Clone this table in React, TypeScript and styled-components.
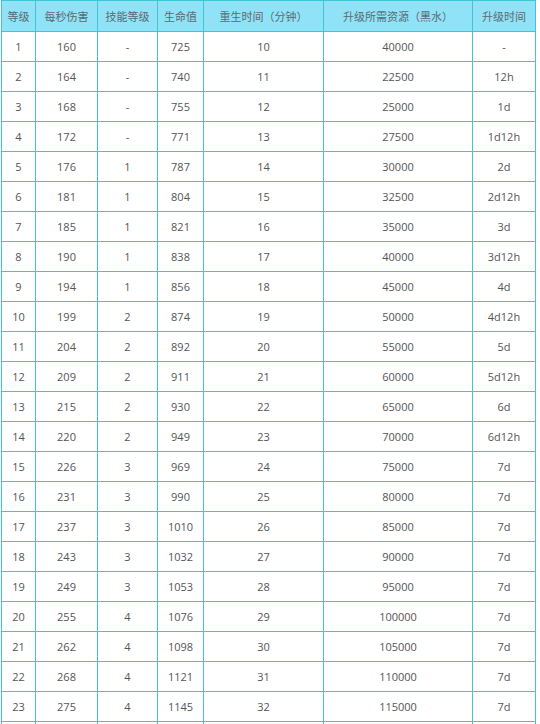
import React from 'react';
import styled, { createGlobalStyle } from 'styled-components';

const GlobalStyle = createGlobalStyle`
    body {
        margin: 0;
        background: #ffffff;
        font-family: 'Noto Sans CJK SC', 'Noto Sans', sans-serif;
    }
`;

const Wrap = styled.div`
    padding-left: 1px;
    width: 535px;
`;

const Table = styled.table`
    width: 534px;
    border-collapse: collapse;
    table-layout: fixed;
    font-size: 11px;
    color: #555;
`;

const HeadCell = styled.th`
    height: 30px;
    padding: 0;
    background: #90e2f7;
    border: 1px solid #3fc6d4;
    font-weight: normal;
    color: #5a6b70;
    text-align: center;
    white-space: nowrap;
`;

const Cell = styled.td`
    height: 29px;
    padding: 0;
    border: 1px solid #3fc6d4;
    text-align: center;
    font-family: 'Open Sans', 'Noto Sans CJK SC', sans-serif;
`;

const columns = [
    { title: '等级', width: 34 },
    { title: '每秒伤害', width: 62 },
    { title: '技能等级', width: 60 },
    { title: '生命值', width: 46 },
    { title: '重生时间（分钟）', width: 120 },
    { title: '升级所需资源（黑水）', width: 149 },
    { title: '升级时间', width: 63 },
];

const rows: string[][] = [
    ['1', '160', '-', '725', '10', '40000', '-'],
    ['2', '164', '-', '740', '11', '22500', '12h'],
    ['3', '168', '-', '755', '12', '25000', '1d'],
    ['4', '172', '-', '771', '13', '27500', '1d12h'],
    ['5', '176', '1', '787', '14', '30000', '2d'],
    ['6', '181', '1', '804', '15', '32500', '2d12h'],
    ['7', '185', '1', '821', '16', '35000', '3d'],
    ['8', '190', '1', '838', '17', '40000', '3d12h'],
    ['9', '194', '1', '856', '18', '45000', '4d'],
    ['10', '199', '2', '874', '19', '50000', '4d12h'],
    ['11', '204', '2', '892', '20', '55000', '5d'],
    ['12', '209', '2', '911', '21', '60000', '5d12h'],
    ['13', '215', '2', '930', '22', '65000', '6d'],
    ['14', '220', '2', '949', '23', '70000', '6d12h'],
    ['15', '226', '3', '969', '24', '75000', '7d'],
    ['16', '231', '3', '990', '25', '80000', '7d'],
    ['17', '237', '3', '1010', '26', '85000', '7d'],
    ['18', '243', '3', '1032', '27', '90000', '7d'],
    ['19', '249', '3', '1053', '28', '95000', '7d'],
    ['20', '255', '4', '1076', '29', '100000', '7d'],
    ['21', '262', '4', '1098', '30', '105000', '7d'],
    ['22', '268', '4', '1121', '31', '110000', '7d'],
    ['23', '275', '4', '1145', '32', '115000', '7d'],
    ['24', '281', '4', '1170', '33', '120000', '7d'],
];

const App: React.FC = () => {
    return (
        <Wrap>
            <GlobalStyle />
            <Table>
                <colgroup>
                    {columns.map((c) => (
                        <col key={c.title} style={{ width: c.width }} />
                    ))}
                </colgroup>
                <thead>
                    <tr>
                        {columns.map((c) => (
                            <HeadCell key={c.title}>{c.title}</HeadCell>
                        ))}
                    </tr>
                </thead>
                <tbody>
                    {rows.map((r) => (
                        <tr key={r[0]}>
                            {r.map((v, i) => (
                                <Cell key={i}>{v}</Cell>
                            ))}
                        </tr>
                    ))}
                </tbody>
            </Table>
        </Wrap>
    );
};

export default App;
